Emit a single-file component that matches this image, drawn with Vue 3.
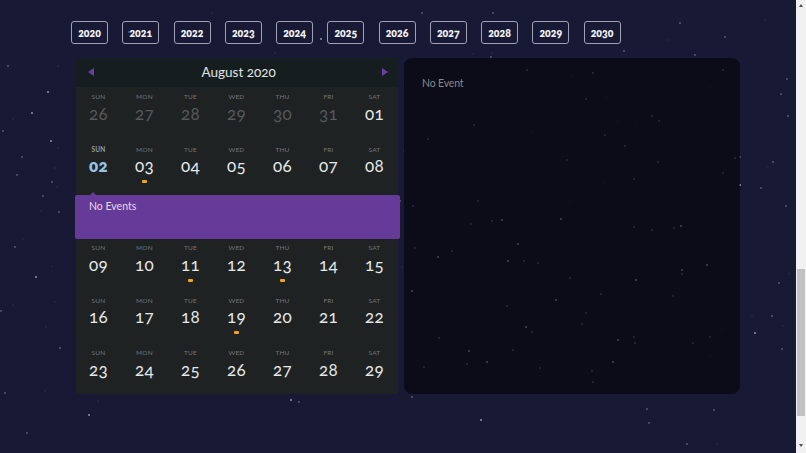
<script setup>
const years = [2020, 2021, 2022, 2023, 2024, 2025, 2026, 2027, 2028, 2029, 2030]
const names = ['SUN', 'MON', 'TUE', 'WED', 'THU', 'FRI', 'SAT']
const mk = (nums, opts = {}) =>
  nums.map((n, i) => ({
    name: names[i],
    n,
    muted: (opts.muted || []).includes(n),
    today: opts.today === n,
    ev: (opts.ev || []).includes(n)
  }))
const before = [
  mk(['26', '27', '28', '29', '30', '31', '01'], { muted: ['26', '27', '28', '29', '30', '31'] }),
  mk(['02', '03', '04', '05', '06', '07', '08'], { today: '02', ev: ['03'] })
]
const after = [
  mk(['09', '10', '11', '12', '13', '14', '15'], { ev: ['11', '13'] }),
  mk(['16', '17', '18', '19', '20', '21', '22'], { ev: ['19'] }),
  mk(['23', '24', '25', '26', '27', '28', '29'])
]
// [x, y, level] level 0 dim, 1 normal, 2 bright
const stars = [
  [8,66,1],[58,66,0],[48,92,2],[32,113,2],[13,119,0],[3,131,1],[51,141,2],[58,148,0],[22,157,1],[17,175,1],[55,168,0],[52,182,1],[57,187,0],[43,196,1],[59,212,1],[41,211,0],[23,239,0],[15,247,1],[36,277,2],[52,266,0],[55,302,0],[1,311,1],[13,305,0],[46,327,0],[60,348,1],[5,393,1],[45,391,0],[27,433,1],
  [98,401,0],[89,415,2],[291,400,2],[299,402,1],[212,13,0],[129,32,1],[321,39,2],[275,53,0],[378,192,0],[400,201,1],[402,267,0],[404,151,0],[408,87,0],
  [413,206,1],[478,201,1],[570,202,0],[492,221,1],[502,220,2],[471,224,1],[561,219,2],[634,227,1],[652,230,1],[674,228,1],[681,226,2],[518,244,2],[415,248,1],[452,251,1],[438,257,2],[508,261,2],[524,261,1],[538,263,1],[707,265,2],[682,270,2],[682,274,1],[570,278,1],[636,280,2],[529,283,0],[412,291,2],[601,294,1],[673,296,1],[556,300,2],[507,306,1],[586,313,1],[432,317,0],[582,324,1],[526,327,2],[532,332,1],[439,338,1],[618,340,2],[634,337,1],[635,343,1],[693,343,1],[710,337,1],[722,330,0],[469,351,2],[513,350,1],[711,356,0],[487,362,2],[467,364,1],[613,362,2],[424,367,1],[540,368,1],[592,371,1],[485,373,0],[593,382,1],
  [412,397,1],[481,420,2],[647,409,1],[714,410,1],[649,423,1],[687,444,1],[717,444,0],
  [422,13,1],[493,13,1],[680,23,1],[725,37,1],[669,40,0],[624,51,1],[473,54,0],[492,53,0],[491,57,1],[695,55,1],[787,79,1],[781,94,1],[788,116,1],[740,157,1],[773,162,1],[768,167,0],[740,185,2],[761,188,1],[786,206,1],
  [527,70,1],[593,73,1],[637,73,0],[572,76,0],[723,70,1],[710,87,0],[586,99,1],[607,98,0],[558,104,0],[474,125,1],[507,123,0],[451,119,0],[532,132,0],[428,139,1],[652,116,1],[659,121,1],[636,123,0],[617,122,0],[605,135,1],[625,146,1],[568,154,0],[567,160,1],[658,162,1],[651,168,0],[723,173,1],[735,158,1],[634,179,1],[604,182,0],
  [779,283,1],[789,274,0],[752,316,0],[772,316,1],[783,326,0],[755,333,2],[782,349,1],[765,20,0]
]
const radius = [0.7, 0.9, 1.1]
const alpha = [0.14, 0.34, 0.55]
</script>

<template>
  <div class="page">
    <svg class="sky" width="796" height="453" viewBox="0 0 796 453" aria-hidden="true">
      <circle
        v-for="(s, i) in stars"
        :key="i"
        :cx="s[0]"
        :cy="s[1]"
        :r="radius[s[2]]"
        :fill-opacity="alpha[s[2]]"
        fill="#e8e8f4"
      />
    </svg>

    <main class="content">
      <nav class="years">
        <button v-for="y in years" :key="y" class="year">{{ y }}</button>
      </nav>

      <div class="board">
        <section class="calendar">
          <header class="cal-head">
            <span class="arrow left"></span>
            <h2 class="title">August 2020</h2>
            <span class="arrow right"></span>
          </header>

          <div v-for="(week, w) in before" :key="'b' + w" class="week">
            <div v-for="d in week" :key="d.n" class="day">
              <span class="dname" :class="{ strong: d.today }">{{ d.name }}</span>
              <span class="dnum" :class="{ muted: d.muted, today: d.today }">{{ d.n }}</span>
              <span v-if="d.ev" class="mark"></span>
            </div>
          </div>

          <div class="drawer">
            <span class="caret"></span>
            No Events
          </div>

          <div v-for="(week, w) in after" :key="'a' + w" class="week">
            <div v-for="d in week" :key="d.n" class="day">
              <span class="dname">{{ d.name }}</span>
              <span class="dnum">{{ d.n }}</span>
              <span v-if="d.ev" class="mark"></span>
            </div>
          </div>
        </section>

        <section class="details">No Event</section>
      </div>
    </main>

    <aside class="scrollbar">
      <span class="sb-arrow up"></span>
      <span class="thumb"></span>
      <span class="sb-arrow down"></span>
    </aside>
  </div>
</template>

<style scoped>
.page {
  position: relative;
  display: flex;
  width: 806px;
  height: 453px;
  overflow: hidden;
  background: #181934;
  font-family: Lato, "Open Sans", sans-serif;
  font-variant-numeric: oldstyle-nums;
}
.sky {
  position: absolute;
  left: 0;
  top: 0;
}
.content {
  position: relative;
  width: 796px;
  padding: 21px 0 0 71px;
  box-sizing: border-box;
}
.years {
  display: flex;
  gap: 14.25px;
}
.year {
  width: 37px;
  height: 23px;
  padding: 0;
  border: 1px solid #a0a1b2;
  border-radius: 3px;
  background: transparent;
  color: #f2f2f4;
  font: 800 10.5px Lato, sans-serif;
  font-variant-numeric: oldstyle-nums;
}
.board {
  display: flex;
  gap: 6px;
  margin: 14px 0 0 4.5px;
}
.calendar {
  width: 322px;
  height: 336px;
  background: #1f2223;
}
.cal-head {
  display: flex;
  align-items: center;
  justify-content: space-between;
  height: 29px;
  padding: 0 9.5px 1px 12px;
  box-sizing: border-box;
  background: #161d1e;
}
.title {
  margin: 0;
  color: #e0e2e2;
  font-size: 13.5px;
  font-weight: 400;
  transform: translateX(1px);
}
.arrow {
  width: 0;
  height: 0;
  border-top: 4.5px solid transparent;
  border-bottom: 4.5px solid transparent;
}
.arrow.left {
  border-right: 6px solid #6a3fa0;
}
.arrow.right {
  border-left: 6px solid #6a3fa0;
}
.week {
  display: grid;
  grid-template-columns: repeat(7, 46px);
  height: 52.5px;
}
.day {
  display: flex;
  flex-direction: column;
  align-items: center;
  padding-top: 6px;
  box-sizing: border-box;
}
.dname {
  height: 8px;
  color: #71767a;
  font-size: 6.5px;
  line-height: 8px;
  letter-spacing: 0.2px;
}
.dname.strong {
  color: #9a9ea0;
  font-weight: 700;
}
.dnum {
  height: 22px;
  margin-top: 1.5px;
  color: #e6e8e8;
  font-size: 17px;
  font-weight: 400;
  line-height: 22px;
  letter-spacing: 0.2px;
}
.dnum.muted {
  color: #55595b;
}
.dnum.today {
  color: #92c1e6;
  font-weight: 800;
}
.mark {
  width: 5px;
  height: 3px;
  margin-top: 3px;
  border-radius: 1px;
  background: #f0a51e;
}
.drawer {
  position: relative;
  width: 325px;
  height: 44px;
  margin: 3px 0 -1px -0.5px;
  padding: 5px 0 0 14px;
  box-sizing: border-box;
  border-radius: 2px;
  background: #663a98;
  color: #e4dcef;
  font-size: 10.5px;
  line-height: 13px;
}
.caret {
  position: absolute;
  left: 14.5px;
  top: -3px;
  width: 0;
  height: 0;
  border-left: 3.5px solid transparent;
  border-right: 3.5px solid transparent;
  border-bottom: 3px solid #663a98;
}
.details {
  width: 336px;
  height: 336px;
  padding: 18.5px 18.5px;
  box-sizing: border-box;
  border-radius: 8px;
  background: rgba(0, 0, 0, 0.52);
  color: #88888c;
  font-size: 10.5px;
  line-height: 13px;
  letter-spacing: -0.15px;
}
.scrollbar {
  position: relative;
  display: flex;
  flex-direction: column;
  align-items: center;
  width: 10px;
  background: #f1f1f1;
}
.thumb {
  width: 8.5px;
  height: 147px;
  margin-top: 262px;
  background: #c1c1c1;
}
.sb-arrow {
  width: 0;
  height: 0;
  border-left: 2.5px solid transparent;
  border-right: 2.5px solid transparent;
}
.sb-arrow.up {
  margin-top: 3.5px;
  border-bottom: 3px solid #505050;
}
.sb-arrow.down {
  margin-top: 28px;
  border-top: 3px solid #505050;
}
</style>
